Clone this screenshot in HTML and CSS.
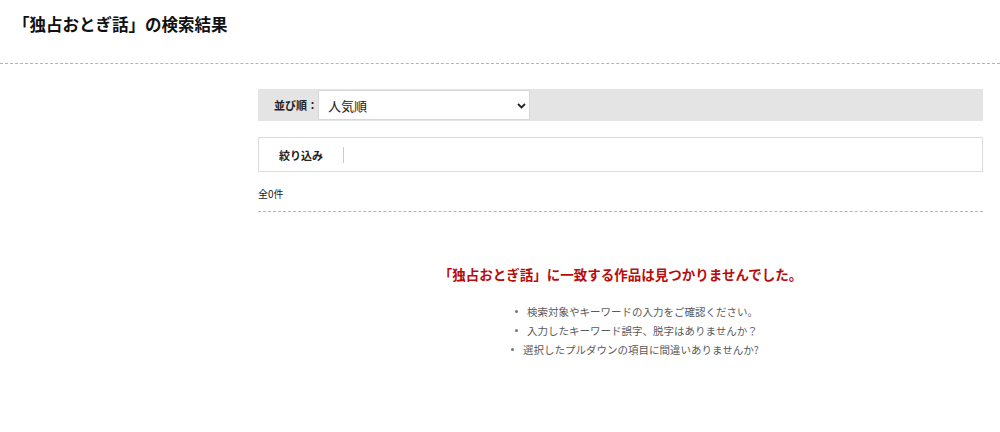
FILE: index.html
```html
<!DOCTYPE html>
<html lang="ja">
<head>
<meta charset="utf-8">
<title>検索結果</title>
<link rel="stylesheet" href="styles.css">
</head>
<body>
<header class="page-head">
  <h1 class="page-title">「独占おとぎ話」の検索結果</h1>
</header>
<main class="content">
  <div class="sort-bar">
    <span class="sort-label">並び順：</span>
    <div class="select-wrap">
      <span class="select-value">人気順</span>
      <svg class="chev" width="9" height="6" viewBox="0 0 9 6"><path d="M1 1l3.5 3.5L8 1" fill="none" stroke="#222" stroke-width="1.8"/></svg>
    </div>
  </div>
  <div class="filter-box">
    <span class="filter-label">絞り込み</span>
    <span class="filter-sep"></span>
  </div>
  <div class="count">全0件</div>
  <section class="empty">
    <h2 class="empty-title">「独占おとぎ話」に一致する作品は見つかりませんでした。</h2>
    <ul class="empty-list">
      <li>検索対象やキーワードの入力をご確認ください。</li>
      <li>入力したキーワード誤字、脱字はありませんか？</li>
      <li class="shift">選択したプルダウンの項目に間違いありませんか?</li>
    </ul>
  </section>
</main>
</body>
</html>
```
FILE: styles.css
```css
* { box-sizing: border-box; }
html, body { margin: 0; padding: 0; background: #fff; }
body {
  font-family: "Noto Sans CJK JP", "Noto Sans", sans-serif;
  color: #222;
}
.page-head {
  height: 64px;
  border-bottom: 1px dashed #b5b5b5;
  padding: 12px 0 0 13px;
}
.page-title {
  margin: 0;
  font-size: 16.5px;
  line-height: 24px;
  font-weight: bold;
  color: #111;
}
.content {
  margin-left: 258px;
  width: 725px;
  padding-top: 25px;
}
.sort-bar {
  display: flex;
  align-items: center;
  height: 32px;
  background: #e4e4e4;
  padding: 1px 0 1px 16px;
}
.sort-label {
  font-size: 11px;
  font-weight: bold;
  width: 44px;
}
.select-wrap {
  display: flex;
  align-items: center;
  justify-content: space-between;
  width: 212px;
  height: 30px;
  background: #fff;
  border: 1px solid #d8d8d8;
  padding: 0 3px 0 9px;
}
.select-value {
  font-size: 13px;
  color: #222;
}
.chev { margin-top: 1px; }
.filter-box {
  display: flex;
  align-items: center;
  height: 35px;
  margin-top: 16px;
  border: 1px solid #dcdcdc;
}
.filter-label {
  font-size: 11px;
  font-weight: bold;
  width: 84px;
  text-align: center;
}
.filter-sep {
  width: 1px;
  height: 16px;
  background: #ccc;
}
.count {
  font-size: 10px;
  line-height: 14px;
  margin-top: 15px;
  height: 25px;
  border-bottom: 1px dashed #b5b5b5;
  color: #222;
}
.empty {
  padding-top: 52px;
}
.empty-title {
  margin: 0;
  text-align: center;
  font-size: 13.5px;
  line-height: 20px;
  font-weight: bold;
  color: #b80c0c;
}
.empty-list {
  margin: 18px 0 0 269px;
  padding: 0;
  list-style: none;
  font-size: 10.5px;
  line-height: 19px;
  color: #5a5a5a;
}
.empty-list li {
  position: relative;
  padding-left: 0;
}
.empty-list li::before {
  content: "";
  position: absolute;
  left: -12px;
  top: 8px;
  width: 3px;
  height: 3px;
  background: #777;
  border-radius: 50%;
}
.empty-list li.shift { margin-left: -4px; }
```
